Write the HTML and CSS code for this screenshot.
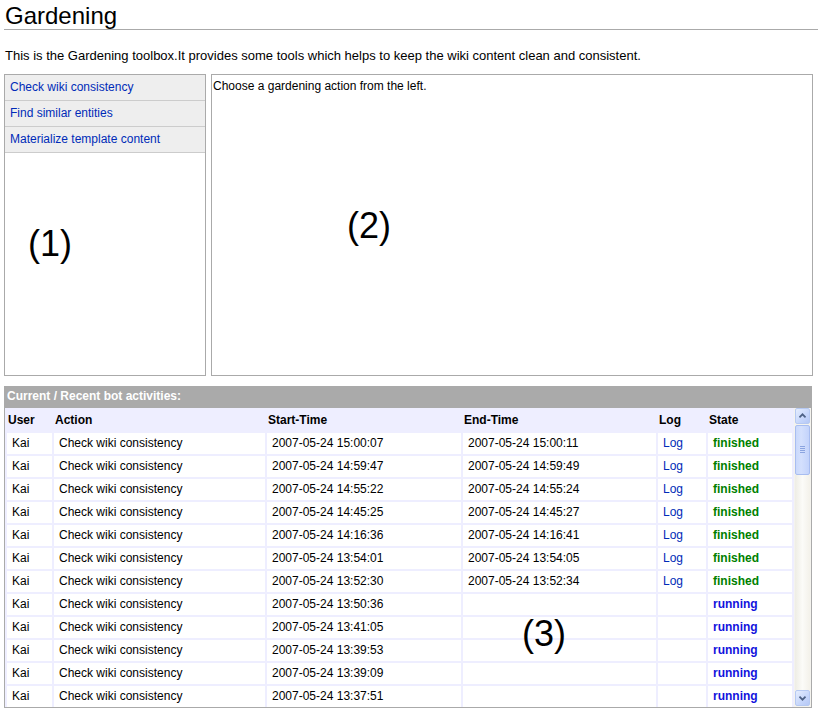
FILE: index.html
```html
<!DOCTYPE html>
<html>
<head>
<meta charset="utf-8">
<title>Gardening</title>
<link rel="stylesheet" href="styles.css">
</head>
<body>
<div class="page">
  <h1 class="title">Gardening</h1>
  <p class="intro">This is the Gardening toolbox.It provides some tools which helps to keep the wiki content clean and consistent.</p>

  <div class="tools">
    <div class="menu">
      <a class="menu-item" href="#">Check wiki consistency</a>
      <a class="menu-item" href="#">Find similar entities</a>
      <a class="menu-item" href="#">Materialize template content</a>
    </div>
    <div class="content">Choose a gardening action from the left.</div>
  </div>

  <div class="activities">
    <div class="act-head">Current / Recent bot activities:</div>
    <div class="act-body">
      <table class="act-table">
        <thead>
          <tr>
            <th class="c-user">User</th>
            <th class="c-action">Action</th>
            <th class="c-start">Start-Time</th>
            <th class="c-end">End-Time</th>
            <th class="c-log">Log</th>
            <th class="c-state">State</th>
          </tr>
        </thead>
        <tbody>
          <tr><td>Kai</td><td>Check wiki consistency</td><td>2007-05-24 15:00:07</td><td>2007-05-24 15:00:11</td><td><a class="log" href="#">Log</a></td><td class="finished">finished</td></tr>
          <tr><td>Kai</td><td>Check wiki consistency</td><td>2007-05-24 14:59:47</td><td>2007-05-24 14:59:49</td><td><a class="log" href="#">Log</a></td><td class="finished">finished</td></tr>
          <tr><td>Kai</td><td>Check wiki consistency</td><td>2007-05-24 14:55:22</td><td>2007-05-24 14:55:24</td><td><a class="log" href="#">Log</a></td><td class="finished">finished</td></tr>
          <tr><td>Kai</td><td>Check wiki consistency</td><td>2007-05-24 14:45:25</td><td>2007-05-24 14:45:27</td><td><a class="log" href="#">Log</a></td><td class="finished">finished</td></tr>
          <tr><td>Kai</td><td>Check wiki consistency</td><td>2007-05-24 14:16:36</td><td>2007-05-24 14:16:41</td><td><a class="log" href="#">Log</a></td><td class="finished">finished</td></tr>
          <tr><td>Kai</td><td>Check wiki consistency</td><td>2007-05-24 13:54:01</td><td>2007-05-24 13:54:05</td><td><a class="log" href="#">Log</a></td><td class="finished">finished</td></tr>
          <tr><td>Kai</td><td>Check wiki consistency</td><td>2007-05-24 13:52:30</td><td>2007-05-24 13:52:34</td><td><a class="log" href="#">Log</a></td><td class="finished">finished</td></tr>
          <tr><td>Kai</td><td>Check wiki consistency</td><td>2007-05-24 13:50:36</td><td></td><td></td><td class="running">running</td></tr>
          <tr><td>Kai</td><td>Check wiki consistency</td><td>2007-05-24 13:41:05</td><td></td><td></td><td class="running">running</td></tr>
          <tr><td>Kai</td><td>Check wiki consistency</td><td>2007-05-24 13:39:53</td><td></td><td></td><td class="running">running</td></tr>
          <tr><td>Kai</td><td>Check wiki consistency</td><td>2007-05-24 13:39:09</td><td></td><td></td><td class="running">running</td></tr>
          <tr><td>Kai</td><td>Check wiki consistency</td><td>2007-05-24 13:37:51</td><td></td><td></td><td class="running">running</td></tr>
        </tbody>
      </table>
      <div class="scrollbar">
        <div class="sb-btn">
          <svg width="15" height="16" viewBox="0 0 15 16"><path d="M4 9.5 L7.5 6 L11 9.5" fill="none" stroke="#4d6185" stroke-width="2"/></svg>
        </div>
        <div class="sb-thumb">
          <svg width="15" height="50" viewBox="0 0 15 50"><path d="M5 21.5h5M5 23.5h5M5 25.5h5M5 27.5h5" stroke="#8ba4e0" stroke-width="1"/></svg>
        </div>
        <div class="sb-track"></div>
        <div class="sb-btn">
          <svg width="15" height="16" viewBox="0 0 15 16"><path d="M4 6.5 L7.5 10 L11 6.5" fill="none" stroke="#4d6185" stroke-width="2"/></svg>
        </div>
      </div>
    </div>
  </div>

  <div class="marker m1">(1)</div>
  <div class="marker m2">(2)</div>
  <div class="marker m3">(3)</div>
</div>
</body>
</html>
```

FILE: styles.css
```css
html, body {
  margin: 0;
  padding: 0;
  background: #ffffff;
}

body {
  font-family: "Liberation Sans", Arial, sans-serif;
  font-size: 12px;
  color: #000000;
}

.page {
  position: relative;
  padding: 0 5px 0 4px;
  height: 714px;
  box-sizing: border-box;
  overflow: hidden;
}

.title {
  margin: 0 -5px 0 0;
  padding: 2px 0 0 1px;
  font-size: 24px;
  font-weight: normal;
  line-height: 27px;
  border-bottom: 1px solid #aaaaaa;
}

.intro {
  margin: 18px 0 0 1px;
  font-size: 13px;
  line-height: 15px;
}

.tools {
  display: flex;
  gap: 5px;
  margin-top: 11px;
  height: 302px;
}

.menu {
  width: 202px;
  box-sizing: border-box;
  border: 1px solid #aaaaaa;
  display: flex;
  flex-direction: column;
}

.menu-item {
  display: block;
  height: 26px;
  line-height: 25px;
  box-sizing: border-box;
  padding-left: 5px;
  background: #eeeeee;
  border-bottom: 1px solid #cccccc;
  color: #002bb8;
  text-decoration: none;
}

.content {
  flex: 1;
  box-sizing: border-box;
  border: 1px solid #aaaaaa;
  padding: 4px 0 0 1px;
  line-height: 14px;
}

.activities {
  margin-top: 10px;
  width: 808px;
  box-sizing: border-box;
  border: 1px solid #aaaaaa;
  border-top: none;
}

.act-head {
  height: 22px;
  line-height: 21px;
  background: #aaaaaa;
  color: #ffffff;
  font-weight: bold;
  margin: 0 -1px 0 -1px;
  padding-left: 3px;
}

.act-body {
  display: flex;
  height: 299px;
  overflow: hidden;
}

.act-table {
  width: 789px;
  flex: none;
  table-layout: fixed;
  border-collapse: separate;
  border-spacing: 2px;
  background: #eeeeff;
  align-self: flex-start;
}

.act-table th,
.act-table td {
  box-sizing: border-box;
  height: 21px;
  line-height: 21px;
  padding: 0 0 0 5px;
  white-space: nowrap;
  overflow: hidden;
  text-align: left;
  font-size: 12px;
}

.act-table th {
  padding-left: 1px;
  font-weight: bold;
  background: #eeeeff;
}

.act-table td {
  background: #ffffff;
}

.c-user { width: 45px; }
.c-action { width: 211px; }
.c-start { width: 194px; }
.c-end { width: 193px; }
.c-log { width: 48px; }
.c-state { width: 84px; }

.log {
  color: #002bb8;
  text-decoration: none;
}

.finished {
  color: #008000;
  font-weight: bold;
}

.running {
  color: #1212dd;
  font-weight: bold;
}

.scrollbar {
  width: 17px;
  flex: none;
  display: flex;
  flex-direction: column;
  background: #f4f3ee;
  padding: 0 1px 1px 1px;
  box-sizing: border-box;
}

.sb-btn {
  height: 16px;
  flex: none;
  box-sizing: border-box;
  border: 1px solid #b6c9f2;
  border-radius: 2px;
  background: linear-gradient(135deg, #e5edfe 0%, #c6d6fb 60%, #b5c8f6 100%);
  display: flex;
  align-items: center;
  justify-content: center;
  overflow: hidden;
}

.sb-btn svg {
  display: block;
}

.sb-thumb {
  height: 50px;
  flex: none;
  margin-top: 1px;
  box-sizing: border-box;
  border: 1px solid #a8bdf0;
  border-radius: 2px;
  background: linear-gradient(90deg, #c9d8fc 0%, #d4e0fd 40%, #c3d3fb 100%);
  overflow: hidden;
}

.sb-thumb svg {
  display: block;
  margin: -1px 0 0 -1px;
}

.sb-track {
  flex: 1;
  background: linear-gradient(90deg, #eeede5 0%, #fbfbf8 50%, #f3f1ea 100%);
}

.marker {
  position: absolute;
  font-size: 36px;
  line-height: 36px;
  color: #000000;
}

.m1 { left: 28px; top: 226px; }
.m2 { left: 347px; top: 208px; }
.m3 { left: 522px; top: 616px; }
```
